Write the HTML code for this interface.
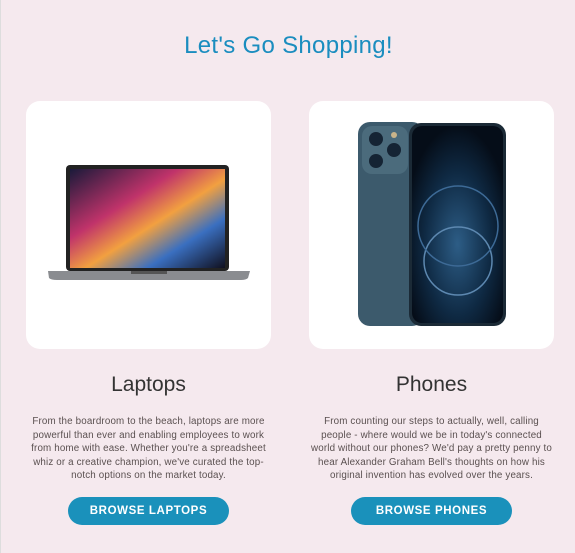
<!DOCTYPE html>
<html><head><style>
body{margin:0;width:575px;height:553px;background:#f5e9ee;font-family:"Liberation Sans",sans-serif;position:relative;overflow:hidden;border-left:1px solid #ddd;box-sizing:border-box}
h1{position:absolute;top:32px;left:0;width:575px;text-align:center;margin:0;font-weight:normal;font-size:24px;letter-spacing:.3px;color:#1a8dbf}
.card{position:absolute;top:101px;width:245px;height:248px;background:#fff;border-radius:14px}
.h{position:absolute;top:373px;width:245px;text-align:center;font-size:21px;color:#333}
.p{position:absolute;top:415px;width:245px;text-align:center;font-size:9.8px;line-height:13.6px;color:#5a5050;letter-spacing:.15px;white-space:nowrap}
.b{position:absolute;top:497px;width:161px;height:28px;border-radius:14px;background:#1a91bb;color:#fff;font-weight:bold;font-size:11.5px;letter-spacing:.6px;text-align:center;line-height:28px}
</style></head><body>
<h1>Let's Go Shopping!</h1>
<div class="card" style="left:25px">
<svg width="245" height="248" style="position:absolute;left:0;top:0">
<defs><linearGradient id="g" x1="0" y1="0" x2="1" y2="1"><stop offset="0" stop-color="#1a1a3a"/><stop offset=".35" stop-color="#c0336a"/><stop offset=".55" stop-color="#f2a040"/><stop offset=".75" stop-color="#3a6fc0"/><stop offset="1" stop-color="#10101f"/></linearGradient></defs>
<rect x="40" y="64" width="163" height="106" rx="4" fill="#222"/>
<rect x="44" y="68" width="155" height="99" fill="url(#g)"/>
<path d="M22 170 H224 L222 177 Q220 179 215 179 H31 Q25 179 23 177Z" fill="#8a8c90"/>
<rect x="105" y="170" width="36" height="3" fill="#555"/>
</svg></div>
<div class="card" style="left:308px">
<svg width="245" height="248" style="position:absolute;left:0;top:0">
<defs><radialGradient id="s" cx=".5" cy=".6" r=".6"><stop offset="0" stop-color="#2d5d86"/><stop offset=".6" stop-color="#0f2a44"/><stop offset="1" stop-color="#050d18"/></radialGradient></defs>
<rect x="49" y="21" width="66" height="204" rx="12" fill="#3c5a6c"/>
<rect x="53" y="25" width="46" height="48" rx="10" fill="#4b6b7c"/>
<circle cx="67" cy="38" r="7" fill="#152434"/><circle cx="67" cy="60" r="7" fill="#152434"/><circle cx="85" cy="49" r="7" fill="#152434"/><circle cx="85" cy="34" r="3" fill="#c9b48a"/>
<rect x="100" y="22" width="97" height="203" rx="12" fill="#1b2a36"/>
<rect x="103" y="25" width="91" height="197" rx="10" fill="url(#s)"/>
<circle cx="149" cy="160" r="34" fill="none" stroke="#5d88b0" stroke-width="1.5"/>
<circle cx="149" cy="125" r="40" fill="none" stroke="#3d6a96" stroke-width="1.5"/>
</svg></div>
<div class="h" style="left:25px">Laptops</div>
<div class="h" style="left:308px">Phones</div>
<div class="p" style="left:25px">From the boardroom to the beach, laptops are more<br>powerful than ever and enabling employees to work<br>from home with ease. Whether you're a spreadsheet<br>whiz or a creative champion, we've curated the top-<br>notch options on the market today.</div>
<div class="p" style="left:308px">From counting our steps to actually, well, calling<br>people - where would we be in today's connected<br>world without our phones? We'd pay a pretty penny to<br>hear Alexander Graham Bell's thoughts on how his<br>original invention has evolved over the years.</div>
<div class="b" style="left:67px">BROWSE LAPTOPS</div>
<div class="b" style="left:350px">BROWSE PHONES</div>
</body></html>
